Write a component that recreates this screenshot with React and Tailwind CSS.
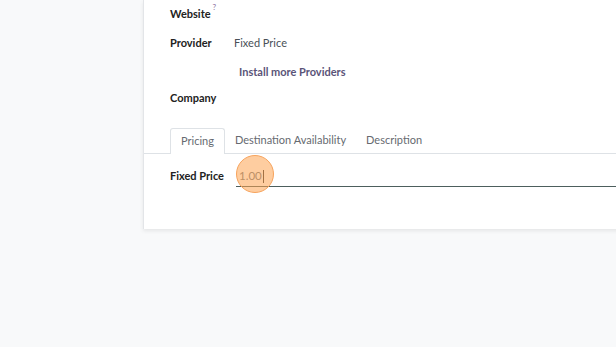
export default function App() {
  return (
    <div className="w-[616px] h-[347px] bg-[#f8f9fa] overflow-hidden relative" style={{ fontFamily: 'Lato, "Open Sans", sans-serif' }}>
      <div className="ml-[143px] w-[500px] h-[229px] bg-white border-l border-[#e3e5e8] shadow-[0_2px_4px_rgba(0,0,0,0.08)] text-[11px] text-[#374151]">
        <div className="pl-[26px]">
          <div className="h-[28px] flex items-center font-bold text-[11px] text-[#222]">
            Website<sup className="text-[#8a6fa0] font-normal ml-[2px] -mt-[6px] text-[8px]">?</sup>
          </div>
          <div className="h-[30px] flex items-center">
            <span className="w-[64px] font-bold text-[11px] text-[#222]">Provider</span>
            <span className="text-[#495057]">Fixed Price</span>
          </div>
          <div className="h-[28px] flex items-center pl-[69px] font-bold text-[#5a5478]">Install more Providers</div>
          <div className="h-[24px] flex items-center font-bold text-[11px] text-[#222]">Company</div>
        </div>
        <div className="mt-[18px] border-b border-[#dee2e6] flex pl-[26px] h-[26px] text-[#666a70]">
          <div className="px-[10px] border border-b-0 border-[#dee2e6] rounded-t-[3px] bg-white -mb-px flex items-center">Pricing</div>
          <div className="px-[10px] flex items-center">Destination Availability</div>
          <div className="px-[10px] flex items-center">Description</div>
        </div>
        <div className="pl-[26px] pt-[12px] flex items-center">
          <span className="w-[66px] font-bold text-[11px] text-[#222] whitespace-nowrap">Fixed Price</span>
          <div className="flex-1 border-b border-[#4d5f5d] h-[21px] flex items-center pl-[3px] relative text-[11.5px] text-[#6c757d]">
            1.00<span className="w-px h-[13px] bg-[#333] ml-px"></span>
            <span className="absolute left-[0px] top-[-11px] w-[38px] h-[38px] rounded-full bg-[rgba(253,164,82,0.55)] border border-[#f7a35c]"></span>
          </div>
        </div>
      </div>
    </div>
  );
}
